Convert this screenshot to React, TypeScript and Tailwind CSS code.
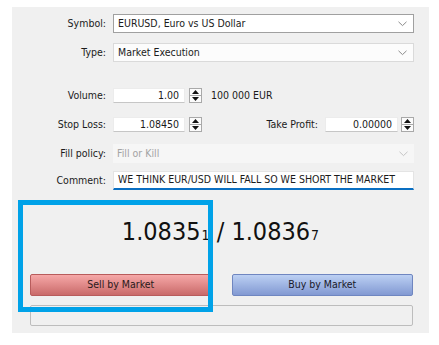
import React from 'react'

const font = { fontFamily: '"DejaVu Sans Condensed", "DejaVu Sans", sans-serif' }

function Chevron({ light }: { light?: boolean }) {
  return (
    <svg width="9" height="6" viewBox="0 0 9 6" className="shrink-0">
      <polyline points="0.5,0.8 4.5,4.6 8.5,0.8" fill="none" stroke={light ? '#c4c4c4' : '#8a8a8a'} strokeWidth="1" />
    </svg>
  )
}

function Spinner() {
  return (
    <div className="flex h-[15px] w-[13px] shrink-0 flex-col border border-[#a9a9a9] bg-[#fbfbfb]">
      <div className="flex flex-1 items-center justify-center border-b border-[#a9a9a9]">
        <svg width="7" height="4" viewBox="0 0 7 4"><polygon points="3.5,0 7,4 0,4" fill="#111" /></svg>
      </div>
      <div className="flex flex-1 items-center justify-center">
        <svg width="7" height="4" viewBox="0 0 7 4"><polygon points="0,0 7,0 3.5,4" fill="#111" /></svg>
      </div>
    </div>
  )
}

function Label({ children }: { children: React.ReactNode }) {
  return <div className="w-[94px] shrink-0 text-right text-[#1b1b1b]">{children}</div>
}

export default function App() {
  return (
    <div className="h-[345px] w-[439px] bg-white pl-[12px] pt-[7px] text-[10.5px]" style={font}>
      <div className="relative flex h-[326px] w-[417px] flex-col bg-[#f0f0f0]">
        {/* Symbol */}
        <div className="mt-[7px] flex h-[19px] items-center gap-[7px]">
          <Label>Symbol:</Label>
          <div className="flex h-[19px] w-[301px] items-center justify-between border border-[#a0a0a0] bg-white pl-[4px] pr-[6px] text-[#1b1b1b]">
            <span>EURUSD, Euro vs US Dollar</span>
            <Chevron />
          </div>
        </div>
        {/* Type */}
        <div className="mt-[10px] flex h-[19px] items-center gap-[7px]">
          <Label>Type:</Label>
          <div className="flex h-[19px] w-[301px] items-center justify-between border border-[#dadada] bg-[#fcfcfc] pl-[4px] pr-[6px] text-[#1b1b1b]">
            <span>Market Execution</span>
            <Chevron />
          </div>
        </div>
        {/* Volume */}
        <div className="mt-[24px] flex h-[19px] items-center gap-[7px]">
          <Label>Volume:</Label>
          <div className="flex h-[15px] w-[72px] items-center justify-end border border-[#ececec] border-b-[#c6c6c6] bg-white pr-[5px] text-[#1b1b1b]">1.00</div>
          <div className="-ml-[3px]"><Spinner /></div>
          <span className="ml-[2px] text-[#1b1b1b]">100 000 EUR</span>
        </div>
        {/* Stop loss / Take profit */}
        <div className="mt-[10px] flex h-[19px] items-center gap-[7px]">
          <Label>Stop Loss:</Label>
          <div className="flex h-[15px] w-[72px] items-center justify-end border border-[#ececec] border-b-[#c6c6c6] bg-white pr-[5px] text-[#1b1b1b]">1.08450</div>
          <div className="-ml-[3px]"><Spinner /></div>
          <span className="ml-auto text-[#1b1b1b]">Take Profit:</span>
          <div className="flex h-[15px] w-[73px] items-center justify-end border border-[#ececec] border-b-[#c6c6c6] bg-white pr-[5px] text-[#1b1b1b]">0.00000</div>
          <div className="-ml-[4px] mr-[15px]"><Spinner /></div>
        </div>
        {/* Fill policy */}
        <div className="mt-[10px] flex h-[19px] items-center gap-[7px]">
          <Label>Fill policy:</Label>
          <div className="flex h-[19px] w-[301px] items-center justify-between bg-[#f6f6f6] pl-[4px] pr-[6px] text-[#a3a3a3]">
            <span>Fill or Kill</span>
            <Chevron light />
          </div>
        </div>
        {/* Comment */}
        <div className="mt-[8px] flex h-[19px] items-center gap-[7px]">
          <Label>Comment:</Label>
          <div className="flex h-[19px] w-[301px] items-center border border-[#e4e4e4] border-b-2 border-b-[#0a6fc2] bg-white pl-[4px] text-[#1b1b1b]">
            WE THINK EUR/USD WILL FALL SO WE SHORT THE MARKET
          </div>
        </div>
        {/* Prices */}
        <div className="mt-[29px] flex h-[26px] items-baseline justify-center leading-none text-[#111]">
          <span className="text-[25px]">1.0835</span>
          <span className="ml-[1px] text-[14px]">1</span>
          <span className="text-[25px]">&nbsp;/ 1.0836</span>
          <span className="ml-[1px] text-[14px]">7</span>
        </div>
        {/* Buttons */}
        <div className="mt-[29px] flex gap-[20px] pl-[18px] pr-[16px]">
          <button className="h-[22px] flex-1 rounded-[2px] border border-[#b85c5c] bg-gradient-to-b from-[#f6a8a8] to-[#c96a6a] text-[#2a1a1a]">Sell by Market</button>
          <button className="h-[22px] flex-1 rounded-[2px] border border-[#6f86c0] bg-gradient-to-b from-[#bcd0f3] to-[#8299d2] text-[#1a1a2a]">Buy by Market</button>
        </div>
        <div className="ml-[18px] mr-[16px] mt-[9px] h-[21px] rounded-[2px] border border-[#bdbdbd] bg-[#f0f0f0]" />
        {/* highlight */}
        <div className="pointer-events-none absolute left-[6px] top-[193px] h-[112px] w-[195px] border-[5px] border-[#00a2e8]" />
      </div>
    </div>
  )
}
